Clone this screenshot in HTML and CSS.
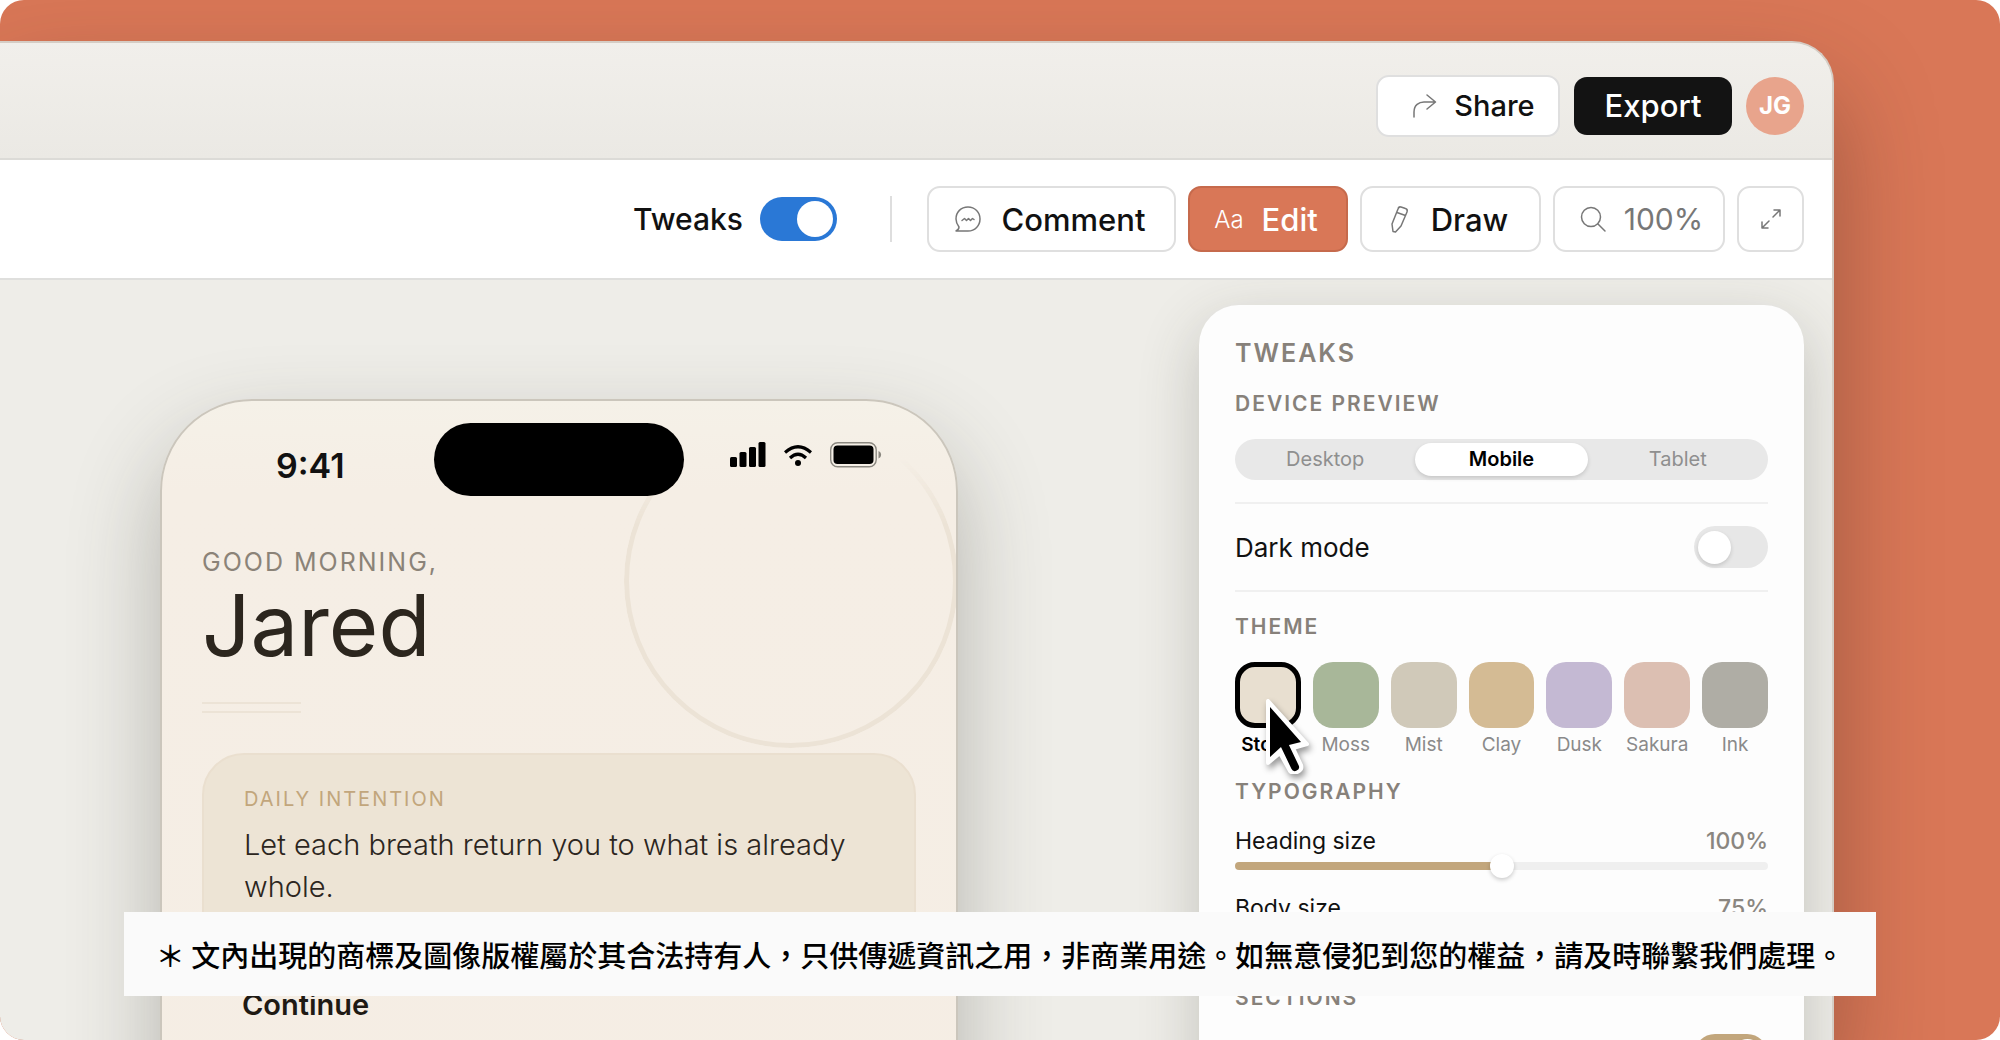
FILE: index.html
```html
<!DOCTYPE html>
<html lang="zh-Hant">
<head>
  <meta charset="utf-8">
  <meta name="viewport" content="width=device-width, initial-scale=1">
  <title>Tweaks</title>
  <link rel="stylesheet" href="styles.css">
</head>
<body>
  <div class="stage">
    <div class="window">
      <header class="titlebar">
        <button class="btn btn-share">
          <svg width="24" height="28" viewBox="0 0 24 28" fill="none" stroke="currentColor" stroke-width="1.5" stroke-linecap="round" stroke-linejoin="round"><path d="M1 25V20C1 13 6 10 11 10H22M14 3L22.500 10L14 17"/></svg>
          Share
        </button>
        <button class="btn btn-export">Export</button>
        <div class="avatar">JG</div>
      </header>

      <div class="toolbar">
        <label class="tweaks-label">Tweaks <input type="checkbox" class="switch switch-blue" checked></label>
        <div class="divider"></div>
        <button class="btn btn-comment">
          <svg width="28" height="28" viewBox="0 0 28 28" fill="none" stroke="currentColor" stroke-width="1.5" stroke-linecap="round" stroke-linejoin="round"><path d="M2 26H14C21 26 26 20.500 26 14S21 2 14 2S2 7 2 14C2 17.500 3.500 20 5 22C5 24 4 25 2 26ZM8 15.500L10.500 13.500L12.500 15.500L14.500 13.500L16.500 15.500L18.500 13.500L20 14.500"/></svg>
          Comment
        </button>
        <button class="btn btn-edit"><span class="aa">Aa</span> Edit</button>
        <button class="btn btn-draw">
          <svg width="22" height="30" viewBox="0 0 22 30" fill="none" stroke="currentColor" stroke-width="1.5" stroke-linecap="round" stroke-linejoin="round"><path d="M3 20L9 5C9.500 3 10 2.500 12 3L16.500 4.500C18.500 5 18.500 6 18 8L12 22L6.500 28L4 27.500ZM8 8.500L16.500 11.500"/></svg>
          Draw
        </button>
        <button class="btn btn-zoom">
          <svg width="28" height="28" viewBox="0 0 28 28" fill="none" stroke="currentColor" stroke-width="1.5" stroke-linecap="round"><circle cx="12" cy="12" r="9.500"/><path d="M19 19L26 26"/></svg>
          100%
        </button>
        <button class="btn btn-expand" aria-label="Full screen">
          <svg width="24" height="24" viewBox="0 0 24 24" fill="none" stroke="currentColor" stroke-width="1.5" stroke-linecap="round" stroke-linejoin="round"><path d="M14 10L21 3M15 3H21V9M10 14L3 21M3 15V21H9"/></svg>
        </button>
      </div>

      <main class="canvas">
        <section class="phone">
          <div class="ring"></div>
          <div class="status">
            <span class="time">9:41</span>
            <span class="island"></span>
            <span class="status-icons">
              <svg width="36" height="26" viewBox="0 0 36 26"><rect x="0" y="15" width="7" height="10" rx="1.500"/><rect x="9.500" y="10" width="7" height="15" rx="1.500"/><rect x="19" y="5" width="7" height="20" rx="1.500"/><rect x="28.500" y="0" width="7" height="25" rx="1.500"/></svg>
              <svg width="28" height="24" viewBox="0 0 28 24" fill="none" stroke="#000" stroke-width="3.200"><path d="M1 10.500Q14 -1 27 10.500M6 16Q14 8.500 22 16"/><circle cx="14" cy="21" r="3" fill="#000" stroke="none"/></svg>
              <svg width="52" height="26" viewBox="0 0 52 26"><rect x=".7" y=".7" width="45.500" height="24" rx="7" fill="none" stroke="#8b8880" stroke-width="1.400"/><rect x="3.500" y="3.500" width="40" height="18.500" rx="4"/><path d="M48.500 9C52 10.500 52 15 48.500 16.500Z" fill="#8b8880"/></svg>
            </span>
          </div>
          <div class="greeting">Good morning,</div>
          <h1 class="name">Jared</h1>
          <div class="rule"></div>
          <div class="intention">
            <h2>Daily intention</h2>
            <p>Let each breath return you to what is already whole.</p>
          </div>
          <h3 class="continue">Continue</h3>
        </section>

        <aside class="panel">
          <h2 class="panel-title">Tweaks</h2>
          <h3 class="label">Device preview</h3>
          <div class="segmented">
            <label><input type="radio" name="device"><span>Desktop</span></label>
            <label><input type="radio" name="device" checked><span>Mobile</span></label>
            <label><input type="radio" name="device"><span>Tablet</span></label>
          </div>
          <label class="row-toggle">Dark mode <input type="checkbox" class="switch"></label>
          <h3 class="label label-theme">Theme</h3>
          <div class="swatches">
            <label><input type="radio" name="theme" class="stone" checked><span>Stone</span></label>
            <label><input type="radio" name="theme" class="moss"><span>Moss</span></label>
            <label><input type="radio" name="theme" class="mist"><span>Mist</span></label>
            <label><input type="radio" name="theme" class="clay"><span>Clay</span></label>
            <label><input type="radio" name="theme" class="dusk"><span>Dusk</span></label>
            <label><input type="radio" name="theme" class="sakura"><span>Sakura</span></label>
            <label><input type="radio" name="theme" class="ink"><span>Ink</span></label>
            <svg class="cursor" width="46" height="76" viewBox="0 0 46 76"><path d="M3 3V65L15 55L25 73C29 77 38 73 36 67L28 50L42 46Z" fill="#fff" stroke="#fff" stroke-width="4" stroke-linejoin="round"/><path d="M5 9V59L16 49L36 44Z"/><path d="M19 46L30 69" stroke="#000" stroke-width="8" stroke-linecap="round"/></svg>
          </div>
          <h3 class="label label-type">Typography</h3>
          <div class="slider">
            <label for="heading">Heading size</label><output>100%</output>
            <input type="range" id="heading" class="half" value="50">
          </div>
          <div class="slider">
            <label for="bodysize">Body size</label><output>75%</output>
            <input type="range" id="bodysize" class="low" value="25">
          </div>
          <h3 class="label label-sections">Sections</h3>
          <div class="row-section"><input type="checkbox" class="switch switch-tan" aria-label="Section" checked></div>
        </aside>
      </main>
    </div>
    <p class="notice">＊ 文內出現的商標及圖像版權屬於其合法持有人，只供傳遞資訊之用，非商業用途。如無意侵犯到您的權益，請及時聯繫我們處理。</p>
  </div>
</body>
</html>
```
FILE: styles.css
```css
* {
  box-sizing: border-box;
}
body {
  margin: 0;
  background: #fff;
  font-family: Inter, "Liberation Sans", sans-serif;
  color: #111;
}
h1, h2, h3, p {
  margin: 0;
}
button, input {
  font: inherit;
  margin: 0;
}
svg {
  flex: none;
}

.stage {
  position: relative;
  display: flex;
  height: 100vh;
  padding: 41px 166px 0 0;
  border-radius: 24px;
  overflow: hidden;
  background: #d97757;
}
.window {
  flex: 1;
  min-width: 0;
  display: flex;
  flex-direction: column;
  border-top: 2px solid #d5cdc5;
  border-right: 2px solid #d5cdc5;
  border-top-right-radius: 42px;
  background: #eeede8;
  box-shadow: 0 50px 100px rgba(70, 40, 30, 0.4);
}

/* title bar */
.titlebar {
  display: flex;
  justify-content: flex-end;
  align-items: center;
  gap: 14px;
  height: 117px;
  padding: 13px 28px 3px;
  border-bottom: 2px solid #dcdbd7;
  border-top-right-radius: 40px;
  background: linear-gradient(#f1efeb, #ebe9e4);
}
.btn {
  display: flex;
  align-items: center;
  justify-content: center;
  height: 66px;
  padding: 0;
  border: 2px solid #dfdfdf;
  border-radius: 13px;
  background: #fff;
  font-size: 31px;
  font-weight: 500;
  color: #111;
  white-space: nowrap;
}
.btn svg {
  color: #777;
}
.btn-share {
  width: 184px;
  height: 62px;
  gap: 17px;
  padding-left: 12px;
  font-size: 29px;
}
.btn-export {
  width: 158px;
  height: 58px;
  border: 0;
  background: #131313;
  color: #fff;
}
.avatar {
  display: flex;
  align-items: center;
  justify-content: center;
  width: 58px;
  height: 58px;
  border-radius: 50%;
  background: #e8a48c;
  color: #fff;
  font-size: 24px;
  font-weight: 700;
}

/* toolbar */
.toolbar {
  display: flex;
  justify-content: flex-end;
  align-items: center;
  gap: 12px;
  height: 120px;
  padding-right: 28px;
  border-bottom: 2px solid #dfdfdd;
  background: #fff;
}
.tweaks-label {
  display: flex;
  align-items: center;
  gap: 17px;
  font-size: 30px;
  font-weight: 500;
}
.divider {
  width: 2px;
  height: 46px;
  margin: 0 23px 0 41px;
  background: #dedede;
}
.btn-comment {
  width: 249px;
  gap: 20px;
  padding-right: 4px;
}
.btn-edit {
  width: 160px;
  gap: 18px;
  padding-right: 4px;
  border-color: #c66a4c;
  background: #d97757;
  color: #fff;
}
.aa {
  font-size: 24px;
  font-weight: 300;
}
.btn-draw {
  width: 181px;
  gap: 20px;
  padding-right: 4px;
}
.btn-zoom {
  width: 172px;
  gap: 17px;
  padding-left: 4px;
  font-size: 30px;
  font-weight: 400;
  color: #777;
}
.btn-expand {
  width: 67px;
}

/* switches */
.switch {
  appearance: none;
  flex: none;
  display: flex;
  align-items: center;
  width: 74px;
  height: 42px;
  padding: 0 4px;
  border-radius: 21px;
  background: #e7e7e7;
}
.switch::before {
  content: "";
  width: 33px;
  height: 33px;
  border-radius: 50%;
  background: #fff;
  box-shadow: 0 2px 4px rgba(0, 0, 0, 0.15);
}
.switch:checked {
  justify-content: flex-end;
}
.switch-blue {
  width: 77px;
  height: 44px;
  border-radius: 22px;
  background: #2a78d6;
}
.switch-blue::before {
  width: 36px;
  height: 36px;
  box-shadow: none;
}
.switch-tan {
  background: #c2a67c;
}

/* canvas */
.canvas {
  flex: 1;
  min-height: 0;
  display: flex;
  justify-content: space-between;
  align-items: stretch;
  padding: 25px 28px 0 160px;
  overflow: hidden;
}
.phone {
  position: relative;
  flex: 0 1 798px;
  height: 1500px;
  margin-top: 94px;
  padding: 0 40px;
  border: 2px solid #cbc6bc;
  border-radius: 92px;
  overflow: hidden;
  background: linear-gradient(#f5f1e8, #f5eee5 90px, #f5ede3);
  box-shadow: 0 40px 90px rgba(60, 60, 50, 0.32);
}
.ring {
  position: absolute;
  top: 13px;
  right: -2px;
  width: 334px;
  height: 334px;
  border: 5px solid #ece3d6;
  border-radius: 50%;
  -webkit-mask-image: linear-gradient(transparent 45px, #000 110px);
  mask-image: linear-gradient(transparent 45px, #000 110px);
}
.status {
  position: relative;
  display: grid;
  grid-template-columns: 1fr 250px 1fr;
  height: 96px;
  padding-top: 22px;
}
.time {
  padding: 23px 0 0 74px;
  font-size: 34px;
  line-height: 40px;
  font-weight: 600;
}
.island {
  height: 73px;
  border-radius: 37px;
  background: #000;
}
.status-icons {
  display: flex;
  align-items: flex-start;
  gap: 18px;
  padding: 19px 0 0 46px;
}
.greeting {
  margin-top: 49px;
  font-size: 25px;
  line-height: 32px;
  letter-spacing: 2px;
  text-transform: uppercase;
  color: #8b8378;
}
.name {
  font-size: 85px;
  line-height: 96px;
  font-weight: 400;
  color: #2c261e;
}
.rule {
  width: 99px;
  height: 11px;
  margin: 28px 0 40px;
  border-top: 2px solid #ece3d6;
  border-bottom: 2px solid #ece3d6;
}
.intention {
  height: 220px;
  padding: 30px 40px;
  border: 2px solid #eadfcf;
  border-radius: 42px;
  background: #ede4d5;
}
.intention h2 {
  font-size: 20px;
  line-height: 28px;
  font-weight: 400;
  letter-spacing: 2px;
  text-transform: uppercase;
  color: #c2a67c;
}
.intention p {
  margin-top: 11px;
  font-size: 29px;
  line-height: 42px;
  font-weight: 300;
  color: #2c261e;
}
.continue {
  margin: 16px 0 0 40px;
  font-size: 29px;
  line-height: 32px;
  font-weight: 600;
  color: #1f1a14;
}

/* tweaks panel */
.panel {
  flex: 0 0 605px;
  height: 1500px;
  padding: 32px 36px;
  border-radius: 40px;
  background: #fdfdfd;
  box-shadow: 0 20px 60px rgba(60, 60, 50, 0.24);
}
.panel-title, .label {
  font-weight: 600;
  letter-spacing: 2px;
  text-transform: uppercase;
  color: #87817a;
}
.panel-title {
  font-size: 25px;
  line-height: 32px;
}
.label {
  font-size: 21px;
  line-height: 28px;
}
.panel-title + .label {
  margin-top: 21px;
}
.segmented {
  display: grid;
  grid-template-columns: repeat(3, 1fr);
  gap: 4px;
  height: 41px;
  margin-top: 21px;
  padding: 4px;
  border-radius: 21px;
  background: #e8e8e8;
  font-size: 20px;
  color: #8f8f8f;
}
.segmented label {
  display: flex;
}
.segmented input {
  appearance: none;
  width: 0;
}
.segmented span {
  flex: 1;
  border-radius: 17px;
  line-height: 33px;
  text-align: center;
}
.segmented input:checked + span {
  background: #fff;
  color: #000;
  font-weight: 600;
  box-shadow: 0 2px 4px rgba(0, 0, 0, 0.15);
}
.row-toggle {
  display: flex;
  justify-content: space-between;
  align-items: center;
  height: 90px;
  margin-top: 22px;
  border-top: 2px solid #f0f0f0;
  border-bottom: 2px solid #f0f0f0;
  font-size: 26px;
}
.label-theme {
  margin-top: 21px;
}
.swatches {
  position: relative;
  display: grid;
  grid-template-columns: repeat(7, 1fr);
  gap: 12px;
  margin-top: 21px;
}
.swatches label {
  display: flex;
  flex-direction: column;
  align-items: center;
  font-size: 19px;
  line-height: 24px;
  color: #8a8a8a;
}
.swatches input {
  appearance: none;
  width: 100%;
  height: 66px;
  margin-bottom: 5px;
  border-radius: 20px;
}
.swatches input:checked {
  border: 5px solid #000;
}
.swatches input:checked + span {
  color: #000;
  font-weight: 600;
}
.stone { background: #e8dfd0; }
.moss { background: #a8b799; }
.mist { background: #d0c9b9; }
.clay { background: #d4bb94; }
.dusk { background: #c4b9d3; }
.sakura { background: #dcbfb2; }
.ink { background: #afada5; }
.cursor {
  position: absolute;
  left: 30px;
  top: 36px;
  filter: drop-shadow(2px 4px 3px rgba(0, 0, 0, 0.4));
}
.label-type {
  margin-top: 21px;
}
.slider {
  display: grid;
  grid-template-columns: 1fr auto;
  grid-template-rows: 28px 24px;
  height: 67px;
  font-size: 23px;
  line-height: 30px;
}
.label-type + .slider {
  margin-top: 20px;
}
.slider output {
  font-weight: 500;
  color: #8a8680;
}
.slider input {
  appearance: none;
  grid-column: 1 / 3;
  align-self: start;
  width: 100%;
  height: 24px;
  background: none;
}
.slider input::-webkit-slider-runnable-track {
  height: 8px;
  border-radius: 4px;
  background: linear-gradient(90deg, #c2a67c 50%, #efefef 50%);
}
.slider .low::-webkit-slider-runnable-track {
  background: linear-gradient(90deg, #c2a67c 25%, #efefef 25%);
}
.slider input::-webkit-slider-thumb {
  appearance: none;
  width: 24px;
  height: 24px;
  margin-top: -8px;
  border-radius: 50%;
  background: #fff;
  box-shadow: 0 2px 4px rgba(0, 0, 0, 0.2);
}
.label-sections {
  margin-top: 24px;
}
.row-section {
  display: flex;
  justify-content: flex-end;
  margin-top: 22px;
}

/* notice over the bottom of the stage */
.notice {
  position: absolute;
  left: 124px;
  right: 124px;
  bottom: 44px;
  padding: 21px 16px;
  background: #fafafa;
  font-family: "Noto Sans CJK TC", sans-serif;
  font-size: 29px;
  line-height: 42px;
  font-weight: 500;
  text-align: center;
  white-space: nowrap;
  color: #000;
}
```
